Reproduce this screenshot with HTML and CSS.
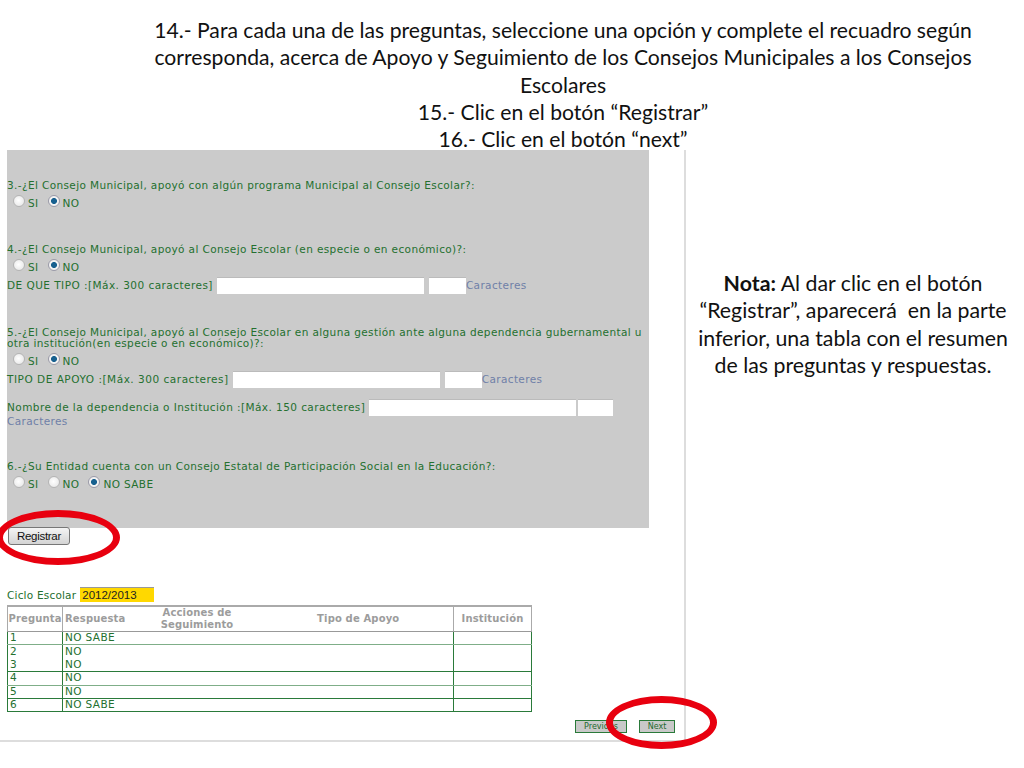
FILE: index.html
```html
<!DOCTYPE html>
<html>
<head>
    <title>Apoyo y Seguimiento</title>
    <link rel="stylesheet" href="styles.css">
</head>
<body>

<div class="slide">
    <div class="title">
        <p>14.- Para cada una de las preguntas, seleccione una opción y complete el recuadro según corresponda, acerca de Apoyo y Seguimiento de los Consejos Municipales a los Consejos Escolares</p>
        <p>15.- Clic en el botón “Registrar”</p>
        <p>16.- Clic en el botón “next”</p>
    </div>

    <div class="main">
        <div class="app">
            <div class="panel">
                <div class="question q3">3.-¿El Consejo Municipal, apoyó con algún programa Municipal al Consejo Escolar?:</div>
                <div class="radios">
                    <label><input type="radio" name="p3"> SI</label>
                    <label><input type="radio" name="p3" checked> NO</label>
                </div>

                <div class="question q4">4.-¿El Consejo Municipal, apoyó al Consejo Escolar (en especie o en económico)?:</div>
                <div class="radios">
                    <label><input type="radio" name="p4"> SI</label>
                    <label><input type="radio" name="p4" checked> NO</label>
                </div>
                <div class="field">
                    <span class="label">DE QUE TIPO :[Máx. 300 caracteres]</span>
                    <input type="text" class="long">
                    <input type="text" class="count">
                    <span class="chars">Caracteres</span>
                </div>

                <div class="question q5">5.-¿El Consejo Municipal, apoyó al Consejo Escolar en alguna gestión ante alguna dependencia gubernamental u otra institución(en especie o en económico)?:</div>
                <div class="radios">
                    <label><input type="radio" name="p5"> SI</label>
                    <label><input type="radio" name="p5" checked> NO</label>
                </div>
                <div class="field tipo">
                    <span class="label">TIPO DE APOYO :[Máx. 300 caracteres]</span>
                    <input type="text" class="long">
                    <input type="text" class="count">
                    <span class="chars">Caracteres</span>
                </div>
                <div class="field inst">
                    <span class="label">Nombre de la dependencia o Institución :[Máx. 150 caracteres]</span>
                    <input type="text" class="long">
                    <input type="text" class="count">
                </div>
                <div class="chars">Caracteres</div>

                <div class="question q6">6.-¿Su Entidad cuenta con un Consejo Estatal de Participación Social en la Educación?:</div>
                <div class="radios">
                    <label><input type="radio" name="p6"> SI</label>
                    <label><input type="radio" name="p6"> NO</label>
                    <label><input type="radio" name="p6" checked> NO SABE</label>
                </div>
            </div>

            <button class="registrar">Registrar</button>

            <div class="ciclo">
                <span class="ciclo-label">Ciclo Escolar</span>
                <span class="ciclo-value">2012/2013</span>
            </div>

            <table class="resumen">
                <tr class="head">
                    <th class="c1">Pregunta</th>
                    <th class="c2">Respuesta</th>
                    <th class="c3">Acciones de Seguimiento</th>
                    <th class="c4">Tipo de Apoyo</th>
                    <th class="c5">Institución</th>
                </tr>
                <tr class="pale"><td class="c1">1</td><td>NO SABE</td><td></td><td></td><td class="c5"></td></tr>
                <tr><td class="c1">2</td><td>NO</td><td></td><td></td><td class="c5"></td></tr>
                <tr class="dark"><td class="c1">3</td><td>NO</td><td></td><td></td><td class="c5"></td></tr>
                <tr class="pale"><td class="c1">4</td><td>NO</td><td></td><td></td><td class="c5"></td></tr>
                <tr class="dark"><td class="c1">5</td><td>NO</td><td></td><td></td><td class="c5"></td></tr>
                <tr class="dark"><td class="c1">6</td><td>NO SABE</td><td></td><td></td><td class="c5"></td></tr>
            </table>

            <div class="pager">
                <button class="prev">Previous</button>
                <button class="next">Next</button>
            </div>
        </div>

        <div class="note">
            <p><b>Nota:</b> Al dar clic en el botón “Registrar”, aparecerá &nbsp;en la parte inferior, una tabla con el resumen de las preguntas y respuestas.</p>
        </div>
    </div>

    <!-- red marks drawn over the screenshot -->
    <div class="mark mark-registrar"></div>
    <div class="mark mark-next"></div>
</div>

</body>
</html>
```

FILE: styles.css
```css
* {
    box-sizing: border-box;
}

body {
    margin: 0;
    background-color: #fff;
}

.slide {
    position: relative;
    width: 1024px;
    height: 768px;
    overflow: hidden;
    font-family: "Lato", "Liberation Sans", sans-serif;
    color: #111;
}

.title {
    height: 150px;
    padding: 17px 48px 0 150px;
    font-size: 21.15px;
    line-height: 27.3px;
    text-align: center;
}

.title p,
.note p {
    margin: 0;
}

.main {
    display: flex;
}

.app {
    width: 686px;
    height: 592px;
    border-right: 2px solid #ddd;
    border-bottom: 2px solid #ddd;
    font-family: "DejaVu Sans", sans-serif;
    font-size: 10.5px;
    letter-spacing: 0.38px;
    color: #24702f;
}

.panel {
    width: 642px;
    height: 378px;
    margin-left: 7px;
    padding-top: 30px;
    background-color: #cbcbcb;
}

.question {
    line-height: 11px;
}

.q4 {
    margin-top: 32px;
}

.q5 {
    margin-top: 33px;
}

.q6 {
    margin-top: 34px;
}

.radios {
    display: flex;
    gap: 9px;
    height: 18px;
    margin-top: 3px;
    padding-left: 6px;
    align-items: center;
}

.radios label {
    display: flex;
    align-items: center;
    gap: 3px;
}

.radios input {
    appearance: none;
    width: 12px;
    height: 12px;
    margin: 0 0 4px 0;
    border: 1px solid #b4b4b4;
    border-radius: 50%;
    background: radial-gradient(circle at 45% 45%, #fff, #e2e2e2);
}

.radios input:checked {
    background: radial-gradient(circle, #17608f 0, #17608f 38%, #f2f2f2 46%);
    border-color: #9a9aa8;
}

.field {
    display: flex;
    align-items: center;
    height: 18px;
}

.field .label {
    letter-spacing: 0.46px;
}

.field.tipo .label {
    letter-spacing: 0.52px;
}

.field input {
    height: 17px;
    border: none;
    border-top: 1px solid #bbb;
    background-color: #fff;
}

.long {
    width: 207px;
    margin-left: 4px;
}

.count {
    width: 37px;
    margin-left: 5px;
}

.chars {
    color: #6f80a8;
    line-height: 11px;
}

.inst {
    margin-top: 10px;
}

.field.inst .label {
    letter-spacing: 0.43px;
}

.inst .count {
    width: 35px;
    margin-left: 2px;
}

.registrar {
    display: block;
    width: 62px;
    height: 18px;
    margin: -1px 0 0 8px;
    padding: 0;
    border: 1px solid #777;
    border-radius: 3px;
    background: linear-gradient(to bottom, #f4f4f4, #d4d4d4);
    font-family: "Liberation Sans", sans-serif;
    font-size: 11.5px;
    letter-spacing: -0.3px;
    color: #111;
}

.ciclo {
    display: flex;
    align-items: center;
    gap: 4px;
    height: 15px;
    margin: 42px 0 3px 7px;
}

.ciclo-label {
    letter-spacing: 0.2px;
}

.ciclo-value {
    width: 74px;
    height: 15px;
    padding-left: 2px;
    background-color: #ffd800;
    border-top: 1px solid #999;
    font-family: "Liberation Sans", sans-serif;
    font-size: 11.5px;
    letter-spacing: 0;
    line-height: 14px;
    color: #222;
}

.resumen {
    width: 524px;
    margin-left: 7px;
    border-collapse: collapse;
    table-layout: fixed;
    line-height: 12px;
}

.resumen th {
    height: 25px;
    padding: 0;
    border-top: 2px solid #aaa;
    border-bottom: 1px solid #999;
    color: #9c9c9c;
    font-weight: bold;
    font-size: 10px;
    letter-spacing: 0.15px;
    text-align: center;
}

.resumen td {
    height: 13.4px;
    padding: 0 0 2px 2px;
    line-height: 10px;
    white-space: nowrap;
}

.resumen .c1 {
    width: 55px;
    border-left: 1px solid #2a7a3a;
    border-right: 1px solid #2a7a3a;
}

.resumen .c2 {
    width: 68px;
    text-align: left;
    padding-left: 2px;
}

.resumen .c3 {
    width: 133px;
}

.resumen .c4 {
    width: 190px;
}

.resumen .c5 {
    width: 78px;
    border-left: 1px solid #2a7a3a;
    border-right: 1px solid #2a7a3a;
}

.resumen .head .c1,
.resumen .head .c5 {
    border-left-color: #aaa;
    border-right-color: #aaa;
}

.resumen .dark td {
    border-bottom: 1px solid #2a7a3a;
}

.resumen .pale td {
    border-bottom: 1px solid #7fae88;
}

.pager {
    display: flex;
    justify-content: flex-end;
    gap: 12px;
    margin: 8px 9px 0 0;
}

.pager button {
    height: 13px;
    padding: 0;
    border: 1px solid #2a7a3a;
    background-color: #c9c9c9;
    font-family: "DejaVu Sans", sans-serif;
    font-size: 8px;
    color: #1f6a30;
}

.prev {
    width: 52px;
}

.next {
    width: 36px;
}

.note {
    width: 338px;
    padding: 120px 12px 0 8px;
    font-size: 21.3px;
    line-height: 27.3px;
    text-align: center;
}

.mark {
    position: absolute;
    border: 7px solid #e8000f;
    border-radius: 50%;
}

.mark-registrar {
    left: -4px;
    top: 510px;
    width: 124px;
    height: 55px;
}

.mark-next {
    left: 606px;
    top: 696px;
    width: 111px;
    height: 53px;
}
```
